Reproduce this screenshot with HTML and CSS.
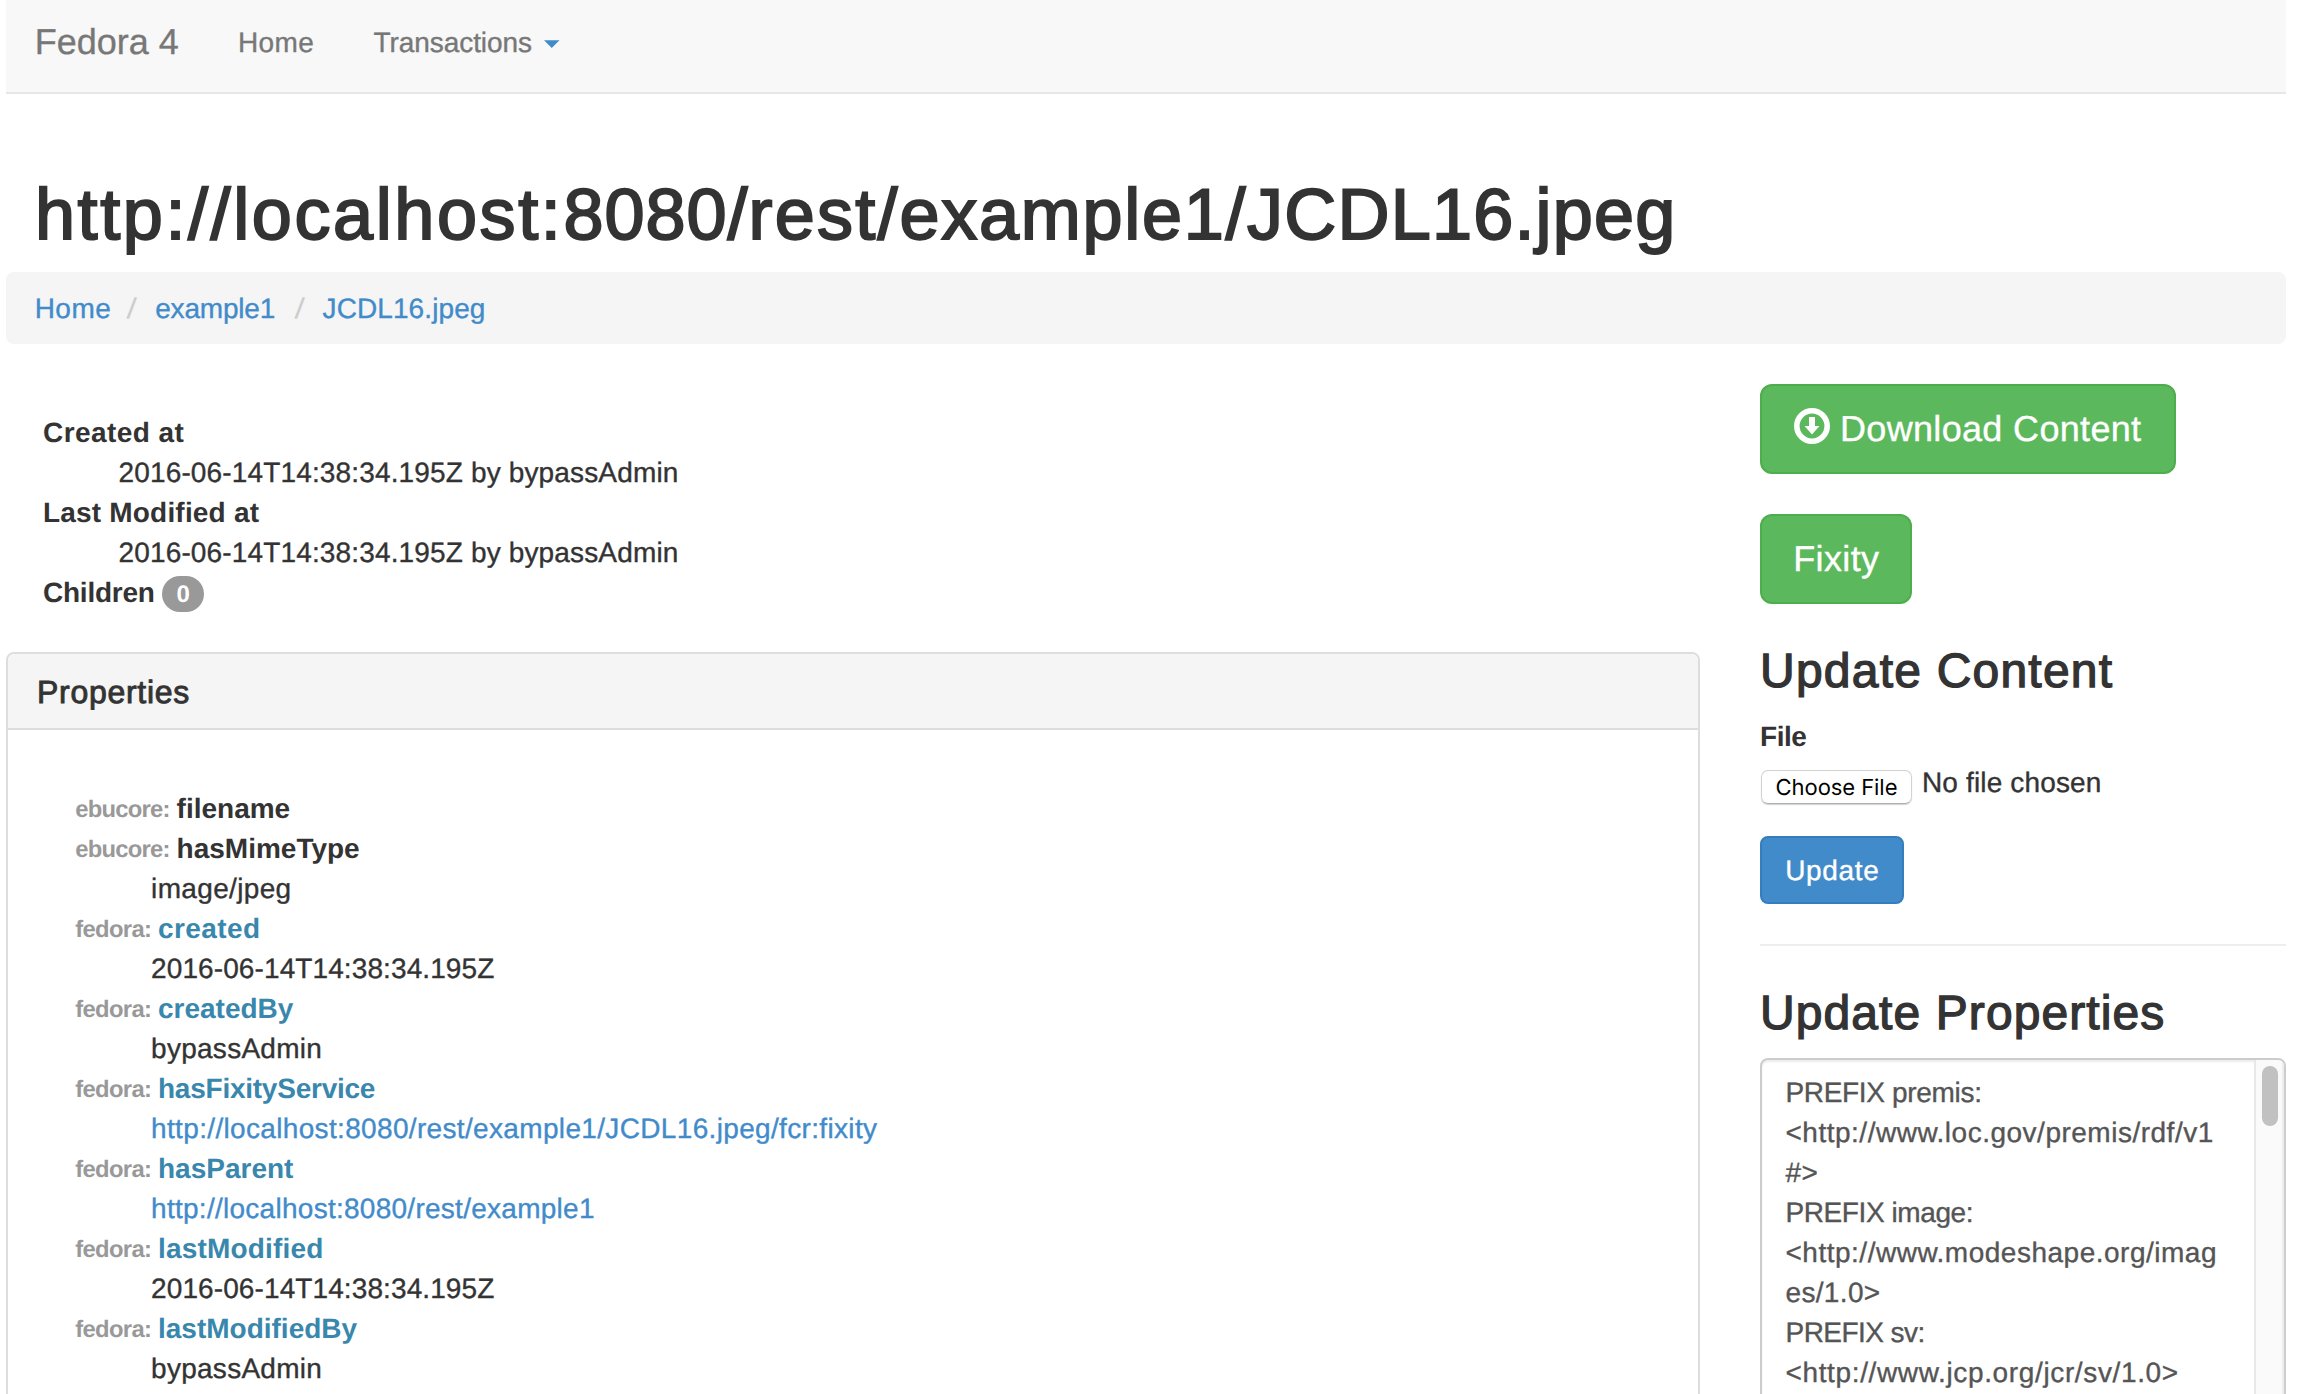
FILE: index.html
```html
<!DOCTYPE html>
<html lang="en">
<head>
<meta charset="utf-8">
<title>http://localhost:8080/rest/example1/JCDL16.jpeg</title>
<link rel="stylesheet" href="styles.css">
</head>
<body>
<div class="container">
  <nav class="navbar">
    <a class="brand">Fedora 4</a>
    <a class="nav-home">Home</a>
    <a class="nav-trans">Transactions</a>
    <svg class="caret" viewBox="0 0 16 8"><path d="M0 0h16L8 8z"/></svg>
  </nav>

  <h1 class="title"><span class="h-host">http://localhost:</span><span class="h-port">8080/</span><span class="h-rest">rest/</span><span class="h-dir">example1/</span><span class="h-file">JCDL16.jpeg</span></h1>

  <div class="breadcrumb">
    <a class="t46">Home</a><span class="slash">/</span><a class="tn20">example1</a><span class="slash second">/</span><a class="t10">JCDL16.jpeg</a>
  </div>

  <div class="columns">
    <main class="main">
      <dl class="meta">
        <dt class="t44">Created at</dt>
        <dd class="t16">2016-06-14T14:38:34.195Z by bypassAdmin</dd>
        <dt class="t19">Last Modified at</dt>
        <dd class="t16">2016-06-14T14:38:34.195Z by bypassAdmin</dd>
        <dt class="children"><span class="tn24">Children</span><span class="badge">0</span></dt>
      </dl>

      <section class="panel">
        <h3 class="panel-title">Properties</h3>
        <dl class="props">
          <dt><span class="ns ebucore">ebucore:</span><span>filename</span></dt>
          <dt><span class="ns ebucore">ebucore:</span><span>hasMimeType</span></dt>
          <dd class="t34">image/jpeg</dd>
          <dt><span class="ns fedora">fedora:</span><a class="t40">created</a></dt>
          <dd class="t10">2016-06-14T14:38:34.195Z</dd>
          <dt><span class="ns fedora">fedora:</span><a>createdBy</a></dt>
          <dd class="t27">bypassAdmin</dd>
          <dt><span class="ns fedora">fedora:</span><a class="tn24">hasFixityService</a></dt>
          <dd class="t34"><a>http://localhost:8080/rest/example1/JCDL16.jpeg/fcr:fixity</a></dd>
          <dt><span class="ns fedora">fedora:</span><a>hasParent</a></dt>
          <dd class="t27"><a>http://localhost:8080/rest/example1</a></dd>
          <dt><span class="ns fedora">fedora:</span><a class="t19">lastModified</a></dt>
          <dd class="t10">2016-06-14T14:38:34.195Z</dd>
          <dt><span class="ns fedora">fedora:</span><a>lastModifiedBy</a></dt>
          <dd class="t27">bypassAdmin</dd>
        </dl>
      </section>
    </main>

    <aside class="side">
      <a class="btn btn-lg download">
        <svg class="icon" viewBox="0 0 36 36"><circle cx="18" cy="18" r="15.200" fill="none" stroke="#fff" stroke-width="5.600"/><path fill="#fff" d="M15 9h6v9h4.500L18 26.500 10.500 18H15z"/></svg>
        <span>Download Content</span>
      </a>
      <a class="btn btn-lg fixity">Fixity</a>

      <h2 class="heading content-heading">Update Content</h2>
      <label class="file-label">File</label>
      <div class="file-row">
        <span class="choose">Choose File</span>
        <span class="t16">No file chosen</span>
      </div>
      <a class="btn update">Update</a>
      <div class="rule"></div>
      <h2 class="heading props-heading">Update Properties</h2>
      <div class="editor">
        <div class="query">
          <div class="tn33">PREFIX premis:</div>
          <div class="t50">&lt;http://www.loc.gov/premis/rdf/v1</div>
          <div class="t50">#&gt;</div>
          <div class="tn41">PREFIX image:</div>
          <div class="t50">&lt;http://www.modeshape.org/imag</div>
          <div class="t34">es/1.0&gt;</div>
          <div class="tn55">PREFIX sv:</div>
          <div class="t64">&lt;http://www.jcp.org/jcr/sv/1.0&gt;</div>
        </div>
        <div class="scrollbar"><div class="thumb"></div></div>
      </div>
    </aside>
  </div>
</div>
</body>
</html>
```
FILE: styles.css
```css
* { box-sizing: border-box; }
html, body { margin: 0; height: 1394px; overflow: hidden; background: #fff; }
body {
  font: 28px/40px "Liberation Sans", Arial, sans-serif;
  color: #333;
  text-rendering: geometricPrecision;
  white-space: nowrap;
  -webkit-text-stroke: .35px currentcolor;
}
h1, h2, h3, dl, dd { margin: 0; }
dt { font-weight: bold; -webkit-text-stroke: 0; }
a { color: #428bca; text-decoration: none; }
.container { width: 2280px; margin-left: 6px; }

/* letter fitting */
.t10 { letter-spacing: .1px; }
.t16 { letter-spacing: .15px; }
.t19 { letter-spacing: .19px; }
.t27 { letter-spacing: .27px; }
.t34 { letter-spacing: .34px; }
.t40 { letter-spacing: .4px; }
.t44 { letter-spacing: .44px; }
.t46 { letter-spacing: .46px; }
.t50 { letter-spacing: .505px; }
.t64 { letter-spacing: .64px; }
.tn20 { letter-spacing: -.2px; }
.tn24 { letter-spacing: -.24px; }
.tn33 { letter-spacing: -.33px; }
.tn41 { letter-spacing: -.41px; }
.tn55 { letter-spacing: -.55px; }

/* navbar */
.navbar {
  display: flex;
  align-items: flex-start;
  height: 94px;
  padding: 22px 0 0 28.700px;
  background: #f8f8f8;
  border-bottom: 2px solid #e7e7e7;
}
.navbar a { color: #777; }
.brand { width: 203.200px; font-size: 36px; }
.nav-home { width: 135.600px; padding-top: 1px; letter-spacing: .46px; }
.nav-trans { width: 171px; padding-top: 1px; letter-spacing: -.06px; }
.caret { width: 15.500px; height: 8px; margin-top: 18px; fill: #428bca; }

.title {
  margin: 81px 0 17px 28.900px;
  font-size: 72px;
  line-height: 80px;
  font-weight: normal;
  -webkit-text-stroke: 2px #333;
}
.h-host { letter-spacing: 2.6px; }
.h-port { letter-spacing: 1px; }
.h-rest { letter-spacing: 2.200px; }
.h-dir { letter-spacing: 1.700px; }
.h-file { letter-spacing: 1.200px; }

.breadcrumb {
  display: flex;
  height: 72px;
  padding: 17px 0 0 28.700px;
  background: #f5f5f5;
  border-radius: 8px;
}
.slash { width: 28px; margin-left: 16px; color: #ccc; transform: skewX(-6deg); }
.slash.second { margin-left: 19.500px; }

.columns { display: flex; }
.main { width: 1694px; padding-top: 69px; }
.side { width: 526px; margin-left: 60px; padding-top: 40px; }

.meta { padding-left: 37px; margin-bottom: 39px; }
.meta dd { padding-left: 75.500px; }
.children { display: flex; }
.badge {
  width: 42px;
  height: 36px;
  margin: 3px 0 0 7.500px;
  border-radius: 18px;
  background: #999;
  color: #fff;
  font-size: 24px;
  line-height: 37px;
  text-align: center;
}

.panel {
  height: 800px;
  border: 2px solid #ddd;
  border-radius: 8px 8px 0 0;
}
.panel-title {
  height: 76px;
  padding: 20px 0 0 29px;
  background: #f5f5f5;
  border-bottom: 2px solid #ddd;
  border-radius: 6px 6px 0 0;
  font-size: 32px;
  line-height: 36px;
  font-weight: normal;
  letter-spacing: .72px;
  -webkit-text-stroke: .9px #333;
}
.props { padding: 59px 0 0 67.200px; }
.props dt { display: flex; height: 40px; }
.props dt a { color: #3a87ad; }
.props dd { padding-left: 75.900px; }
.ns { color: #999; font-size: 23.800px; line-height: 42px; }
.ebucore { width: 101.400px; letter-spacing: -.76px; }
.fedora { width: 82.800px; letter-spacing: -.65px; }

/* sidebar */
.btn {
  display: flex;
  width: 144px;
  height: 68px;
  padding: 13px 0 0 23.200px;
  border: 2px solid #357ebd;
  border-radius: 8px;
  background: #428bca;
  color: #fff;
}
.btn-lg {
  height: 90px;
  padding: 23px 0 0 31.200px;
  border-color: #4cae4c;
  border-radius: 12px;
  background: #5cb85c;
  font-size: 36px;
}
.download { width: 416px; letter-spacing: .33px; }
.icon { width: 36px; height: 36px; margin: -1px 10px 0 .800px; }
.fixity { width: 152px; margin-top: 40px; letter-spacing: .38px; }
.heading {
  height: 54px;
  padding-top: 1px;
  font-size: 48px;
  line-height: 54px;
  font-weight: normal;
  -webkit-text-stroke: 1.3px #333;
}
.content-heading { margin-top: 40px; letter-spacing: 1.22px; }
.props-heading { margin-top: 40px; letter-spacing: 1.09px; }
.file-label {
  display: block;
  margin-top: 19px;
  font-weight: bold;
  letter-spacing: -.45px;
  -webkit-text-stroke: 0;
}
.file-row { display: flex; height: 60px; margin-top: 6px; }
.choose {
  width: 151px;
  height: 34px;
  margin: 7px 10px 0 1px;
  border: 1px solid #d2d2d2;
  border-bottom-color: #b0b0b0;
  border-radius: 7px;
  box-shadow: 0 1px 1px rgba(0, 0, 0, .18);
  color: #000;
  font: 22px/35px Inter, sans-serif;
  letter-spacing: -.07px;
  text-align: center;
  -webkit-text-stroke: 0;
}
.update { margin-top: 13px; letter-spacing: .65px; }
.rule { height: 2px; margin-top: 40px; background: #eee; }
.editor {
  display: flex;
  justify-content: space-between;
  height: 400px;
  margin-top: 18px;
  border: 2px solid #ccc;
  border-radius: 8px;
  box-shadow: inset 0 2px 2px rgba(0, 0, 0, .075);
  color: #555;
  overflow: hidden;
}
.query { padding: 13px 0 0 23.500px; }
.scrollbar {
  width: 30px;
  padding: 6px 0 0 6px;
  background: #fafafa;
  border-left: 2px solid #e8e8e8;
  border-right: 2px solid #ededed;
}
.thumb { width: 16px; height: 60px; border-radius: 8px; background: #c1c1c1; }
```
